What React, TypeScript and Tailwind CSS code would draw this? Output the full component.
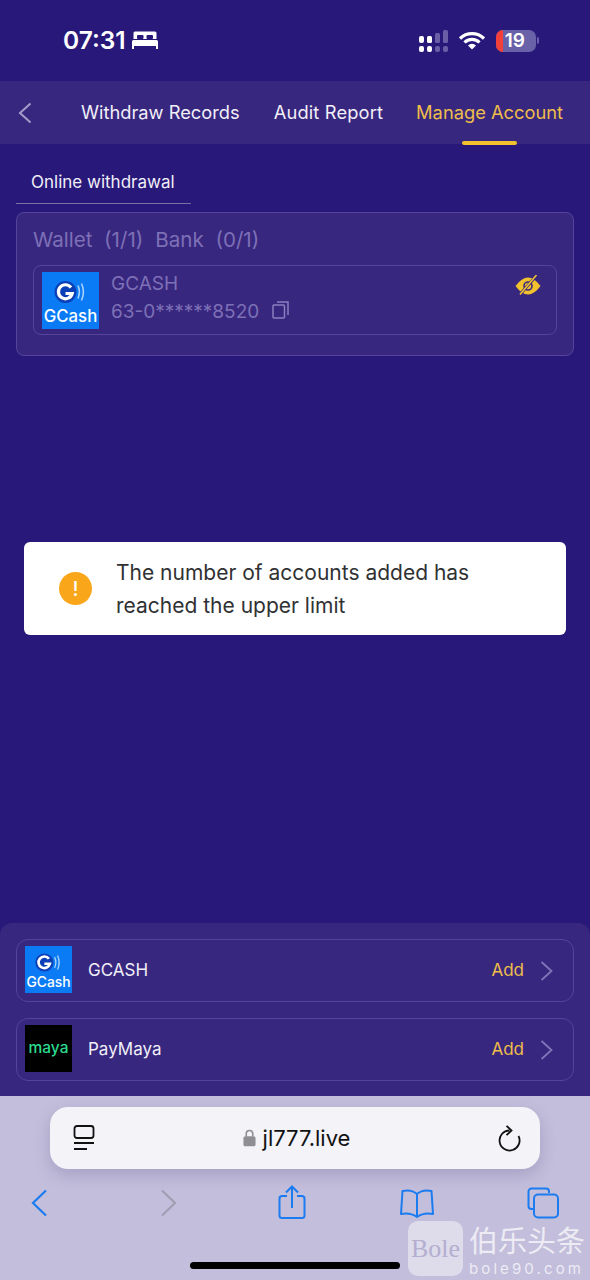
const font = { fontFamily: 'Inter, "Noto Sans CJK SC", sans-serif' }

function GcashLogo({ className }: { className: string }) {
  return (
    <svg viewBox="0 0 57 57" className={className}>
      <rect width="57" height="57" fill="#0a7bf5" />
      <circle cx="23.500" cy="20" r="11" fill="#0b3fb8" />
      <path d="M29 15.500a7 7 0 1 0 1.200 6h-6.700" fill="none" stroke="#fff" strokeWidth="3.200" />
      <path d="M36 13.500q2.800 6.500 0 13M39.500 11.500q3.800 8.500 0 17" fill="none" stroke="#a9d2fb" strokeWidth="1.600" />
      <text x="28.500" y="49.500" textAnchor="middle" fill="#fff" fontSize="16.800" fontWeight="500" fontFamily="Inter, sans-serif">
        GCash
      </text>
    </svg>
  )
}

function StatusBar() {
  return (
    <div className="h-[81px] shrink-0 flex items-center pl-[63px] pr-[51px]">
      <span className="text-[24.500px] font-semibold text-white leading-none">07:31</span>
      <svg viewBox="0 0 26 18" className="w-[26px] h-[18px] ml-[6px] -mt-[1px]">
        <path d="M3 0.500h20a1.500 1.500 0 0 1 1.500 1.500v6h-23V2A1.500 1.500 0 0 1 3 0.500z" fill="#fff" />
        <rect x="5" y="4" width="6.500" height="4" rx="1" fill="#28187a" />
        <rect x="14.500" y="4" width="6.500" height="4" rx="1" fill="#28187a" />
        <path d="M1.500 9h23a1.500 1.500 0 0 1 1.500 1.500V18h-2v-3H2v3H0v-7.500A1.500 1.500 0 0 1 1.500 9z" fill="#fff" />
      </svg>
      <div className="ml-auto flex items-center">
        <svg viewBox="0 0 31 22" className="w-[31px] h-[22px]">
          <rect x="1" y="6" width="5" height="7" rx="2" fill="#fff" />
          <rect x="1" y="16" width="5" height="6" rx="2" fill="#fff" />
          <rect x="9" y="6" width="5" height="7" rx="1.500" fill="#fff" />
          <rect x="9" y="16" width="5" height="6" rx="2" fill="#fff" />
          <rect x="17" y="3" width="5" height="10" rx="1.500" fill="#6a5fa6" />
          <rect x="17" y="16" width="5" height="6" rx="2" fill="#6a5fa6" />
          <rect x="25" y="0" width="5" height="13" rx="1.500" fill="#6a5fa6" />
          <rect x="25" y="16" width="5" height="6" rx="2" fill="#6a5fa6" />
        </svg>
        <svg viewBox="0 0 26 19" className="w-[26px] h-[19px] ml-[10px]">
          <path d="M1 7.500a17 17 0 0 1 24 0M5.500 11.500a10.500 10.500 0 0 1 15 0" fill="none" stroke="#fff" strokeWidth="3.200" />
          <path d="M9 14.500a5.500 5.500 0 0 1 8 0L13 18.500z" fill="#fff" />
        </svg>
        <div className="ml-[11px] w-[40px] h-[22px] rounded-[7px] bg-[#6a62a8] overflow-hidden relative flex items-center justify-end pr-[11px]">
          <div className="absolute left-0 top-0 bottom-0 w-[7px] bg-[#f4403a]" />
          <span className="relative text-[19px] font-semibold text-white leading-none">19</span>
        </div>
        <div className="ml-[1px] w-[2px] h-[7px] rounded-r-full bg-[#6a62a8]" />
      </div>
    </div>
  )
}

function TabBar() {
  return (
    <div className="h-[63px] shrink-0 bg-[#38277f] flex items-center text-[18.300px] text-[#f1eff8] relative">
      <svg viewBox="0 0 14 22" className="w-[14px] h-[22px] ml-[18px]">
        <path d="M12.500 1.500 2 11l10.500 9.500" fill="none" stroke="#a49cc9" strokeWidth="2" />
      </svg>
      <span className="ml-[49px]">Withdraw Records</span>
      <span className="ml-[34px] tracking-[0.15px]">Audit Report</span>
      <span className="ml-[33px] text-[#eebd4a]">Manage Account</span>
      <div className="absolute left-[462px] bottom-[-1px] w-[55px] h-[4px] rounded-[2px] bg-[#f2c12e]" />
    </div>
  )
}

function AccountCard() {
  return (
    <div className="mt-[8px] mx-[16px] h-[144px] rounded-[8px] border border-[#54449a] bg-[#38277f] px-[16px] pt-[13px]">
      <div className="flex gap-[12px] text-[20.600px] leading-[28px] text-[#7d70b6]">
        <span className="whitespace-pre">Wallet  (1/1)</span>
        <span className="whitespace-pre">Bank  (0/1)</span>
      </div>
      <div className="mt-[11px] h-[70px] rounded-[8px] border border-[#54449a] flex items-center pl-[8px] pr-[15px]">
        <GcashLogo className="w-[57px] h-[57px] shrink-0" />
        <div className="ml-[12px] pb-[6px] flex flex-col gap-[5px] text-[#7d70b6] text-[19px] leading-[23px]">
          <span>GCASH</span>
          <div className="flex items-center">
            <span>63-0******8520</span>
            <svg viewBox="0 0 17 18" className="w-[17px] h-[18px] ml-[13px] -mt-[3px]">
              <rect x="1" y="4" width="11.500" height="13" rx="1" fill="none" stroke="#8b7fc0" strokeWidth="1.500" />
              <path d="M5 1h11v13" fill="none" stroke="#8b7fc0" strokeWidth="1.500" />
            </svg>
          </div>
        </div>
        <svg viewBox="0 0 26 20" className="w-[26px] h-[20px] ml-auto self-start mt-[9px]">
          <path d="M0.500 11Q13 -6 25.500 11Q13 28 0.500 11z" fill="#f2c12e" />
          <circle cx="13" cy="11" r="4" fill="none" stroke="#38277f" strokeWidth="1.600" />
          <path d="M21.500 0.500 4.500 20" stroke="#38277f" strokeWidth="2.800" />
          <path d="M21.500 0 5 19.500" stroke="#f2c12e" strokeWidth="1.600" />
        </svg>
      </div>
    </div>
  )
}

function Toast() {
  return (
    <div className="absolute left-[24px] top-[542px] w-[542px] h-[93px] rounded-[6px] bg-white flex items-center pl-[35px]">
      <div className="w-[33px] h-[33px] rounded-full bg-[#faa61a] flex items-center justify-center text-white text-[20px] font-medium shrink-0">
        !
      </div>
      <p className="ml-[24px] mt-[1px] text-[21px] leading-[33px] text-[#303133]">
        The number of accounts added has
        <br />
        reached the upper limit
      </p>
    </div>
  )
}

function AddRow({ name, logo }: { name: string; logo: React.ReactNode }) {
  return (
    <div className="h-[63px] rounded-[12px] border border-[#54449a] flex items-center pl-[8px] pr-[20px]">
      {logo}
      <span className="ml-[16px] text-[17px] text-[#f1eff8]">{name}</span>
      <span className="ml-auto text-[17px] text-[#eebd4a]">Add</span>
      <svg viewBox="0 0 13 20" className="w-[13px] h-[20px] ml-[16px]">
        <path d="M1.500 1 11.500 10l-10 9" fill="none" stroke="#8075b8" strokeWidth="1.800" />
      </svg>
    </div>
  )
}

function BottomSheet() {
  return (
    <div className="mt-auto h-[173px] shrink-0 rounded-t-[12px] bg-[#38277f] px-[16px] pt-[16px] flex flex-col gap-[16px]">
      <AddRow name="GCASH" logo={<GcashLogo className="w-[47px] h-[47px] shrink-0 mb-[2px]" />} />
      <AddRow
        name="PayMaya"
        logo={
          <div className="w-[47px] h-[47px] shrink-0 mb-[2px] bg-black flex items-center justify-center text-[#2bdc8f] text-[15.500px] font-medium leading-none pb-[2px]">
            maya
          </div>
        }
      />
    </div>
  )
}

function SafariBar() {
  return (
    <div className="h-[184px] shrink-0 bg-[#c3bedb] relative">
      <div className="mt-[11px] mx-[50px] h-[62px] rounded-[18px] bg-[#f3f3f8] shadow-[0_6px_16px_rgba(70,60,120,0.22)] flex items-center justify-between pl-[23px] pr-[19px]">
        <svg viewBox="0 0 22 26" className="w-[22px] h-[26px]">
          <rect x="1.500" y="1" width="19" height="12" rx="2.500" fill="none" stroke="#111" strokeWidth="1.800" />
          <path d="M1 18h20M1 24h13" stroke="#111" strokeWidth="1.800" />
        </svg>
        <div className="flex items-center text-[22px] text-[#111] leading-none">
          <svg viewBox="0 0 14 19" className="w-[13px] h-[18px] mr-[7px]">
            <path d="M3.500 8V5a3.500 3.500 0 0 1 7 0v3" fill="none" stroke="#8e8e93" strokeWidth="1.700" />
            <rect x="0.500" y="7.500" width="13" height="11" rx="2" fill="#8e8e93" />
          </svg>
          jl777.live
        </div>
        <svg viewBox="0 0 23 27" className="w-[23px] h-[27px]">
          <path d="M11.500 5.500A10 10 0 1 0 20.500 11" fill="none" stroke="#111" strokeWidth="1.800" />
          <path d="M8.500 0.800l5 4.700-5 4.700" fill="none" stroke="#111" strokeWidth="1.800" />
        </svg>
      </div>
      <div className="mt-[16px] pl-[31px] flex items-start">
        <svg viewBox="0 0 17 28" className="w-[17px] h-[28px] mt-[4px]">
          <path d="M15 1.500 2 14l13 12.500" fill="none" stroke="#1a7cf0" strokeWidth="2.200" />
        </svg>
        <svg viewBox="0 0 17 28" className="w-[17px] h-[28px] mt-[4px] ml-[112px]">
          <path d="M2 1.500 15 14 2 26.500" fill="none" stroke="#a19db3" strokeWidth="2.200" />
        </svg>
        <svg viewBox="0 0 28 36" className="w-[28px] h-[36px] ml-[101px]">
          <path d="M9 11H4a2.500 2.500 0 0 0-2.500 2.500v17A2.500 2.500 0 0 0 4 33h20a2.500 2.500 0 0 0 2.500-2.500v-17A2.500 2.500 0 0 0 24 11h-5" fill="none" stroke="#1a7cf0" strokeWidth="2" />
          <path d="M14 23V2M8 7.500 14 1.500l6 6" fill="none" stroke="#1a7cf0" strokeWidth="2" />
        </svg>
        <svg viewBox="0 0 34 30" className="w-[34px] h-[30px] ml-[94px] mt-[4px]">
          <path d="M17 5C13 1.500 7 1 2.500 2L1 25c5-1 11-.5 16 3 5-3.500 11-4 16-3L31.500 2C27 1 21 1.500 17 5zM17 5v23" fill="none" stroke="#1a7cf0" strokeWidth="2" strokeLinejoin="round" />
        </svg>
        <svg viewBox="0 0 32 32" className="w-[32px] h-[32px] ml-[93px] mt-[2px]">
          <path d="M6 22H4.500A3 3 0 0 1 1.500 19V4.500A3 3 0 0 1 4.500 1.500H19a3 3 0 0 1 3 3V6" fill="none" stroke="#1a7cf0" strokeWidth="2" />
          <rect x="7" y="7.500" width="24" height="23" rx="4" fill="none" stroke="#1a7cf0" strokeWidth="2" />
        </svg>
      </div>
      <div className="absolute left-[190px] top-[166px] w-[210px] h-[7px] rounded-full bg-black" />
    </div>
  )
}

function Watermark() {
  return (
    <div className="absolute left-[408px] top-[1221px] flex items-start text-white">
      <div
        className="w-[55px] h-[55px] rounded-[10px] bg-[#ffffff]/45 flex items-center justify-center text-[#b4aed0] text-[26px] leading-none"
        style={{ fontFamily: '"Liberation Serif", serif' }}
      >
        Bole
      </div>
      <div className="ml-[6px] flex flex-col opacity-70">
        <span
          className="text-[29px] leading-[37px] whitespace-nowrap"
          style={{ fontFamily: '"Noto Sans CJK SC", sans-serif' }}
        >
          伯乐头条
        </span>
        <span className="mt-[1px] text-[15px] leading-[20px] tracking-[3.100px] whitespace-nowrap">bole90.com</span>
      </div>
    </div>
  )
}

export default function App() {
  return (
    <div className="w-[590px] h-[1280px] bg-[#28187a] relative overflow-hidden flex flex-col" style={font}>
      <StatusBar />
      <TabBar />
      <div className="mt-[20px] ml-[16px] w-[175px] h-[40px] border-b border-[#7b6fa6] pl-[15px] text-[17px] leading-[36px] text-[#f1eff8]">
        Online withdrawal
      </div>
      <AccountCard />
      <Toast />
      <BottomSheet />
      <SafariBar />
      <Watermark />
    </div>
  )
}
